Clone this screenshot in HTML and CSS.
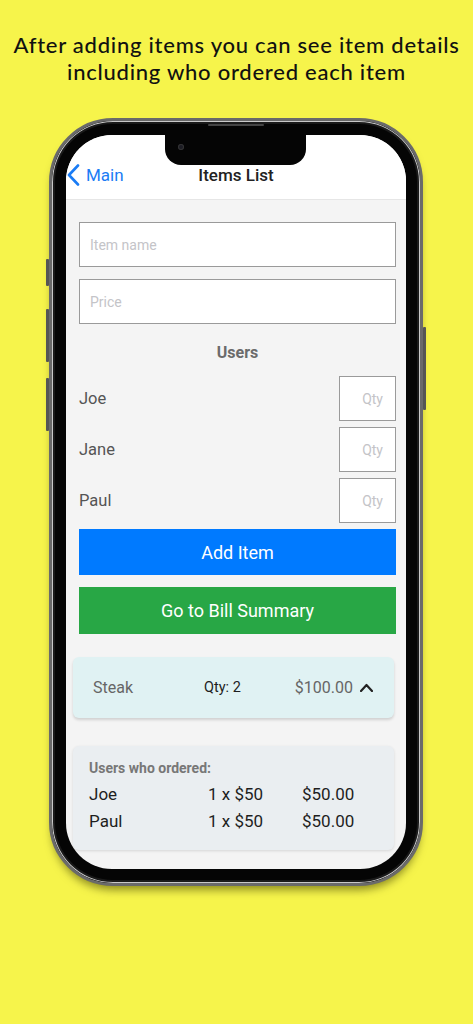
FILE: index.html
```html
<!DOCTYPE html>
<html>
<head>
<meta charset="utf-8">
<link rel="stylesheet" href="styles.css">
</head>
<body>
<h1 class="caption">After adding items you can see item details<br>including who ordered each item</h1>
<div class="phone">
  <span class="btn btn-l1"></span>
  <span class="btn btn-l2"></span>
  <span class="btn btn-l3"></span>
  <span class="btn btn-r1"></span>
  <span class="speaker"></span>
  <div class="screen">
    <div class="notch"><span class="camera"></span></div>
    <div class="nav">
      <div class="back">
        <svg width="13" height="22" viewBox="0 0 13 22"><polyline points="11,1.5 2,11 11,20.5" fill="none" stroke="#1a7cf5" stroke-width="2.6" stroke-linecap="round" stroke-linejoin="round"/></svg>
        <span>Main</span>
      </div>
      <div class="nav-title">Items List</div>
    </div>
    <div class="content">
      <div class="form">
        <div class="input"><span class="ph">Item name</span></div>
        <div class="input"><span class="ph">Price</span></div>
        <div class="users-title">Users</div>
        <div class="user-row"><span class="uname">Joe</span><div class="qty"><span class="ph">Qty</span></div></div>
        <div class="user-row"><span class="uname">Jane</span><div class="qty"><span class="ph">Qty</span></div></div>
        <div class="user-row"><span class="uname">Paul</span><div class="qty"><span class="ph">Qty</span></div></div>
        <div class="button blue">Add Item</div>
        <div class="button green">Go to Bill Summary</div>
      </div>
      <div class="list">
        <div class="item-card">
          <span class="item-name">Steak</span>
          <span class="item-qty">Qty: 2</span>
          <span class="item-price">$100.00</span>
          <svg class="chev" width="13" height="9" viewBox="0 0 13 9"><polyline points="1,8 6.5,2 12,8" fill="none" stroke="#222" stroke-width="2.2" stroke-linecap="round" stroke-linejoin="round"/></svg>
        </div>
        <div class="detail-card">
          <div class="detail-title">Users who ordered:</div>
          <div class="detail-row"><span>Joe</span><span>1 x $50</span><span>$50.00</span></div>
          <div class="detail-row"><span>Paul</span><span>1 x $50</span><span>$50.00</span></div>
        </div>
      </div>
    </div>
  </div>
</div>
</body>
</html>
```
FILE: styles.css
```css
html, body {
  margin: 0;
  padding: 0;
}
body {
  background: #f6f44b;
  width: 473px;
  height: 1024px;
  overflow: hidden;
}
.caption {
  margin: 0;
  padding-top: 31px;
  height: 54px;
  font-family: "Lato", "Noto Sans", sans-serif;
  font-weight: 500;
  font-size: 22px;
  line-height: 27px;
  text-align: center;
  color: #111;
  letter-spacing: 0.75px;
  white-space: nowrap;
}
.phone {
  position: relative;
  box-sizing: border-box;
  margin: 33px 0 0 49px;
  width: 374px;
  height: 768px;
  padding: 14px;
  background: #050505;
  border: 3px solid #6a6a6a;
  border-radius: 64px;
  box-shadow: inset 0 0 0 1px #c9c9c9, inset 0 0 0 3px #1a1a1a, 0 7px 8px -3px rgba(60, 60, 0, 0.55);
}
.btn {
  position: absolute;
  width: 3px;
  background: #555;
  border-radius: 1px;
}
.btn-l1 { left: -6px; top: 138px; height: 27px; }
.btn-l2 { left: -6px; top: 188px; height: 53px; }
.btn-l3 { left: -6px; top: 257px; height: 53px; }
.btn-r1 { right: -6px; top: 206px; height: 83px; }
.speaker {
  position: absolute;
  left: 156px;
  top: 3px;
  width: 56px;
  height: 2px;
  background: #444;
  border-radius: 1px;
}
.screen {
  position: relative;
  height: 100%;
  background: #f4f4f4;
  border-radius: 46px;
  overflow: hidden;
  display: flex;
  flex-direction: column;
  font-family: "Roboto", "Liberation Sans", sans-serif;
}
.notch {
  position: absolute;
  left: 99px;
  top: 0;
  width: 141px;
  height: 30px;
  background: #050505;
  border-radius: 0 0 16px 16px;
}
.camera {
  position: absolute;
  left: 13px;
  top: 9px;
  width: 6px;
  height: 6px;
  border-radius: 50%;
  background: #1c1c24;
  box-shadow: inset 0 0 0 1px #333;
}
.nav {
  height: 65px;
  flex: none;
  background: #fff;
  border-bottom: 1px solid #e6e6e6;
  box-sizing: border-box;
  display: grid;
  grid-template-columns: 1fr auto 1fr;
  align-items: end;
  padding: 0 0 13px 0;
}
.back {
  display: flex;
  align-items: center;
  gap: 6px;
  padding-left: 1px;
  color: #1a7cf5;
  font-size: 17px;
}
.nav-title {
  font-weight: 500;
  font-size: 17px;
  color: #222;
  line-height: 22px;
}
.content {
  flex: 1;
  display: flex;
  flex-direction: column;
}
.form {
  padding: 22px 10px 0 13px;
  display: flex;
  flex-direction: column;
}
.input {
  height: 45px;
  box-sizing: border-box;
  background: #fff;
  border: 1.5px solid #9a9a9a;
  display: flex;
  align-items: center;
  padding-left: 10px;
  margin-bottom: 12px;
}
.ph {
  color: #c4c4c8;
  font-size: 14px;
}
.users-title {
  margin-top: 5px;
  text-align: center;
  font-weight: 700;
  font-size: 16px;
  line-height: 24px;
  color: #6b6b6b;
  margin-bottom: 11px;
}
.user-row {
  display: flex;
  align-items: center;
  justify-content: space-between;
  margin-bottom: 6px;
}
.uname {
  font-size: 16.5px;
  color: #555;
}
.qty {
  width: 57px;
  height: 45px;
  box-sizing: border-box;
  background: #fff;
  border: 1.5px solid #9a9a9a;
  display: flex;
  align-items: center;
  justify-content: flex-end;
  padding-right: 12px;
}
.button {
  height: 46px;
  display: flex;
  align-items: center;
  justify-content: center;
  color: #fff;
  font-size: 18px;
}
.blue {
  background: #007aff;
}
.green {
  margin-top: 12px;
  height: 47px;
  background: #28a745;
}
.list {
  padding: 23px 12px 0 7px;
  display: flex;
  flex-direction: column;
}
.item-card {
  height: 61px;
  box-sizing: border-box;
  background: #e0f2f3;
  border-radius: 6px;
  box-shadow: 0 2px 3px rgba(0, 0, 0, 0.15);
  display: grid;
  grid-template-columns: 111px 1fr auto auto;
  align-items: center;
  column-gap: 7px;
  padding: 0 21px 0 20px;
}
.item-name {
  font-size: 16px;
  color: #666;
}
.item-qty {
  font-size: 14.5px;
  color: #1e1e1e;
  margin-left: -7px;
}
.item-price {
  font-size: 16px;
  color: #666;
}
.detail-card {
  margin-top: 28px;
  height: 104px;
  box-sizing: border-box;
  background: #eaeef1;
  border-radius: 6px;
  box-shadow: 0 1px 3px rgba(0, 0, 0, 0.12);
  padding: 13px 16px 0 16px;
}
.detail-title {
  font-weight: 700;
  font-size: 14px;
  line-height: 18px;
  color: #777;
  margin-bottom: 4px;
}
.detail-row {
  display: grid;
  grid-template-columns: 119px 94px auto;
  font-size: 17px;
  line-height: 27px;
  color: #1e1e1e;
}
```
